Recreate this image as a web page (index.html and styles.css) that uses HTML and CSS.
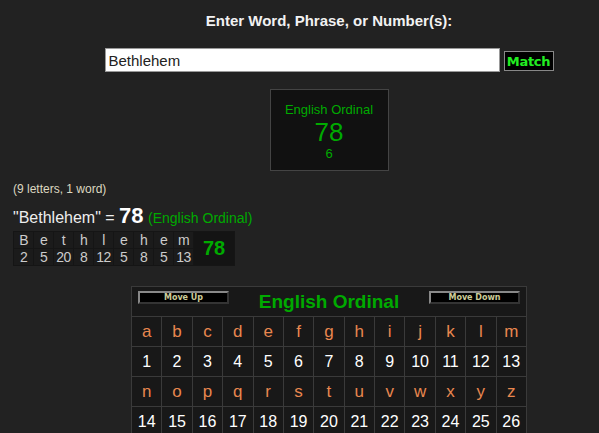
FILE: index.html
```html
<!DOCTYPE html>
<html lang="en">

<head>
    <meta charset="UTF-8">
    <meta name="viewport" content="width=device-width, initial-scale=1.0">
    <title>Gematria</title>
    <link rel="stylesheet" href="styles.css">
</head>

<body>

    <!-- Entrada -->
    <div class="top">
        <div class="prompt">Enter Word, Phrase, or Number(s):</div>
        <div class="search">
            <input type="text" class="phrase" value="Bethlehem">
            <button class="match">Match</button>
        </div>
        <div class="cipher-box">
            <div class="cb-name">English Ordinal</div>
            <div class="cb-value">78</div>
            <div class="cb-red">6</div>
        </div>
    </div>

    <!-- Resultado -->
    <div class="result">
        <div class="count">(9 letters, 1 word)</div>
        <div class="sum">"Bethlehem" = <b>78</b> <span class="sum-cipher">(English Ordinal)</span></div>
        <table class="breakdown">
            <tr>
                <td>B</td><td>e</td><td>t</td><td>h</td><td>l</td><td>e</td><td>h</td><td>e</td><td>m</td>
                <td class="total" rowspan="2">78</td>
            </tr>
            <tr>
                <td>2</td><td>5</td><td>20</td><td>8</td><td>12</td><td>5</td><td>8</td><td>5</td><td>13</td>
            </tr>
        </table>
    </div>

    <!-- Tabela da cifra -->
    <div class="chart-wrap">
        <table class="chart">
            <tr class="chart-head">
                <td colspan="13">
                    <div class="head-row">
                        <button class="move">Move Up</button>
                        <span class="chart-title">English Ordinal</span>
                        <button class="move">Move Down</button>
                    </div>
                </td>
            </tr>
            <tr class="letters">
                <td>a</td><td>b</td><td>c</td><td>d</td><td>e</td><td>f</td><td>g</td><td>h</td><td>i</td><td>j</td><td>k</td><td>l</td><td>m</td>
            </tr>
            <tr class="nums">
                <td>1</td><td>2</td><td>3</td><td>4</td><td>5</td><td>6</td><td>7</td><td>8</td><td>9</td><td>10</td><td>11</td><td>12</td><td>13</td>
            </tr>
            <tr class="letters">
                <td>n</td><td>o</td><td>p</td><td>q</td><td>r</td><td>s</td><td>t</td><td>u</td><td>v</td><td>w</td><td>x</td><td>y</td><td>z</td>
            </tr>
            <tr class="nums">
                <td>14</td><td>15</td><td>16</td><td>17</td><td>18</td><td>19</td><td>20</td><td>21</td><td>22</td><td>23</td><td>24</td><td>25</td><td>26</td>
            </tr>
        </table>
    </div>

</body>

</html>
```

FILE: styles.css
```css
* {
    box-sizing: border-box;
}

body {
    margin: 0;
    font-family: "Liberation Sans", Arial, sans-serif;
    background-color: #222;
    color: #fff;
    height: 433px;
    overflow: hidden;
}

.top {
    padding-left: 59px;
    display: flex;
    flex-direction: column;
    align-items: center;
}

.prompt {
    margin-top: 12px;
    font-size: 15px;
    font-weight: bold;
    line-height: 18px;
    color: #f2f2f2;
}

.search {
    display: flex;
    align-items: center;
    gap: 4px;
    margin-top: 18px;
}

.phrase {
    width: 395px;
    height: 24px;
    border: 1px solid #999;
    padding: 0 3px;
    font-family: "Liberation Sans", Arial, sans-serif;
    font-size: 15px;
    color: #222;
    background-color: #fff;
    outline: none;
}

.match {
    width: 50px;
    height: 20px;
    padding: 0;
    margin-top: 2px;
    background-color: #000;
    border: 1px solid #888;
    color: #2e2;
    font-family: "DejaVu Sans", Verdana, sans-serif;
    font-weight: bold;
    font-size: 13px;
    letter-spacing: -0.3px;
}

.cipher-box {
    margin-top: 17px;
    width: 119px;
    height: 82px;
    background-color: #111;
    border: 1px solid #444;
    text-align: center;
    color: #0a0;
    padding-top: 12px;
}

.cb-name {
    font-size: 13px;
    line-height: 15px;
}

.cb-value {
    font-size: 26px;
    line-height: 28px;
    margin-top: 1px;
}

.cb-red {
    font-size: 13px;
    line-height: 15px;
}

.result {
    padding-left: 13px;
}

.count {
    margin-top: 11px;
    font-size: 12px;
    line-height: 14px;
    color: #ddd8c0;
}

.sum {
    margin-top: 10px;
    font-size: 16px;
    line-height: 19px;
    color: #eee;
}

.sum b {
    font-size: 22px;
    color: #fff;
}

.sum-cipher {
    font-size: 14px;
    color: #0a0;
}

.breakdown {
    margin-top: 3px;
    border-collapse: collapse;
    background-color: #1b1b1b;
}

.breakdown td {
    border: 1px solid #151515;
    width: 20px;
    height: 17px;
    padding: 0;
    text-align: center;
    font-size: 14px;
    line-height: 15px;
    letter-spacing: -0.6px;
    color: #ccc;
}

.breakdown td.total {
    width: 41px;
    background-color: #141414;
    color: #0a0;
    font-size: 20px;
    font-weight: bold;
    letter-spacing: 0;
}

.chart-wrap {
    padding-left: 59px;
    display: flex;
    justify-content: center;
    margin-top: 20px;
}

.chart {
    width: 396px;
    border-collapse: collapse;
    background-color: #181818;
    border: 1px solid #3a3a3a;
    table-layout: fixed;
}

.chart td {
    border: 1px solid #3a3a3a;
    text-align: center;
    padding: 0;
    height: 30px;
}

.chart-head td {
    padding: 0 6px;
}

.head-row {
    display: flex;
    justify-content: space-between;
    align-items: center;
}

.move {
    width: 91px;
    height: 13px;
    padding: 0;
    margin-top: -8px;
    background-color: #000;
    border: 2px solid #888;
    border-style: outset;
    color: #cc9;
    font-family: "DejaVu Sans", Verdana, sans-serif;
    font-weight: bold;
    font-size: 8px;
    line-height: 9px;
}

.chart-title {
    color: #0a0;
    font-size: 19px;
    font-weight: bold;
}

.letters td {
    color: #e8874f;
    font-size: 17px;
}

.nums td {
    color: #fff;
    font-size: 16px;
}
```
